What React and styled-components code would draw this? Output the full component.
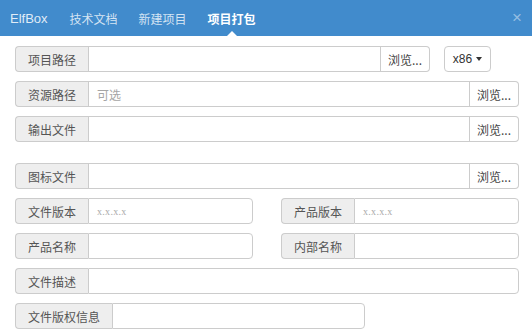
import React from "react";
import styled, { createGlobalStyle } from "styled-components";

const Global = createGlobalStyle`
  html, body {
    margin: 0;
    padding: 0;
    background: #fff;
  }
  body {
    font-family: "Liberation Sans", "Noto Sans CJK SC", sans-serif;
    font-size: 12px;
    color: #555;
  }
`;

const Header = styled.div`
  height: 36px;
  background: #418bcc;
  display: flex;
  align-items: center;
  padding: 0 10px;
  position: relative;
`;

const Brand = styled.div`
  font-size: 13px;
  color: rgba(255, 255, 255, 0.85);
  margin-right: 22px;
`;

const Nav = styled.div`
  display: flex;
  gap: 21px;
  height: 100%;
`;

const NavItem = styled.div`
  position: relative;
  display: flex;
  align-items: center;
  font-size: 12px;
  color: ${(p) => (p.$active ? "#fff" : "rgba(255, 255, 255, 0.78)")};
  font-weight: ${(p) => (p.$active ? "bold" : "normal")};

  &::after {
    content: "";
    display: ${(p) => (p.$active ? "block" : "none")};
    position: absolute;
    left: 50%;
    bottom: 0;
    margin-left: -5px;
    border-left: 5px solid transparent;
    border-right: 5px solid transparent;
    border-bottom: 5px solid #fff;
  }
`;

const Close = styled.div`
  position: absolute;
  right: 10px;
  top: 8px;
  font-size: 17px;
  color: rgba(255, 255, 255, 0.45);
  font-family: "Liberation Sans", sans-serif;
`;

const Body = styled.div`
  padding: 10px 13px 0 15px;
  display: flex;
  flex-direction: column;
  gap: 9px;
`;

const Row = styled.div`
  display: flex;
  align-items: center;
  gap: 14px;
  margin-top: ${(p) => (p.$spaced ? "12px" : "0")};
`;

const Cols = styled.div`
  display: grid;
  grid-template-columns: 1fr 1fr;
  column-gap: 28px;
`;

const Group = styled.div`
  display: flex;
  height: 26px;
  flex: ${(p) => (p.$width ? "none" : "1")};
  width: ${(p) => (p.$width ? p.$width + "px" : "auto")};
  box-sizing: border-box;
`;

const Addon = styled.div`
  display: flex;
  align-items: center;
  padding: 0 12px;
  background: #eee;
  border: 1px solid #ccc;
  border-right: none;
  border-radius: 4px 0 0 4px;
  color: #555;
  font-family: "Noto Sans CJK SC", sans-serif;
  font-size: 12px;
  white-space: nowrap;
`;

const Field = styled.div`
  flex: 1;
  display: flex;
  align-items: center;
  padding: 0 8px;
  border: 1px solid #ccc;
  border-radius: ${(p) => (p.$btn ? "0" : "0 4px 4px 0")};
  background: #fff;
  color: #a5a5a5;
  font-size: 12px;
  font-family: "Noto Sans CJK SC", sans-serif;
`;

const Placeholder = styled.span`
  font-family: "Liberation Serif", serif;
  font-size: 10px;
  letter-spacing: 0.3px;
  color: #aaa;
`;

const Browse = styled.div`
  display: flex;
  align-items: center;
  padding: 0 7px;
  border: 1px solid #ccc;
  border-left: none;
  border-radius: 0 4px 4px 0;
  background: #fff;
  color: #444;
  font-family: "Noto Sans CJK SC", sans-serif;
  font-size: 12px;
`;

const Drop = styled.div`
  height: 26px;
  width: 47px;
  box-sizing: border-box;
  border: 1px solid #ccc;
  border-radius: 4px;
  display: flex;
  align-items: center;
  justify-content: center;
  gap: 4px;
  color: #333;
  font-size: 12px;
`;

const Caret = styled.span`
  border-left: 3px solid transparent;
  border-right: 3px solid transparent;
  border-top: 4px solid #333;
`;

function Input({ label, hint, serif, browse }) {
  return (
    <>
      <Addon>{label}</Addon>
      <Field $btn={browse}>
        {hint && (serif ? <Placeholder>{hint}</Placeholder> : hint)}
      </Field>
      {browse && <Browse>浏览...</Browse>}
    </>
  );
}

export default function App() {
  return (
    <>
      <Global />
      <Header>
        <Brand>ElfBox</Brand>
        <Nav>
          <NavItem>技术文档</NavItem>
          <NavItem>新建项目</NavItem>
          <NavItem $active>项目打包</NavItem>
        </Nav>
        <Close>×</Close>
      </Header>
      <Body>
        <Row>
          <Group $width={415}>
            <Input label="项目路径" browse />
          </Group>
          <Drop>
            x86 <Caret />
          </Drop>
        </Row>
        <Row>
          <Group>
            <Input label="资源路径" hint="可选" browse />
          </Group>
        </Row>
        <Row>
          <Group>
            <Input label="输出文件" browse />
          </Group>
        </Row>
        <Row $spaced>
          <Group>
            <Input label="图标文件" browse />
          </Group>
        </Row>
        <Cols>
          <Group>
            <Input label="文件版本" hint="x.x.x.x" serif />
          </Group>
          <Group>
            <Input label="产品版本" hint="x.x.x.x" serif />
          </Group>
        </Cols>
        <Cols>
          <Group>
            <Input label="产品名称" />
          </Group>
          <Group>
            <Input label="内部名称" />
          </Group>
        </Cols>
        <Row>
          <Group>
            <Input label="文件描述" />
          </Group>
        </Row>
        <Row>
          <Group $width={350}>
            <Input label="文件版权信息" />
          </Group>
        </Row>
      </Body>
    </>
  );
}
